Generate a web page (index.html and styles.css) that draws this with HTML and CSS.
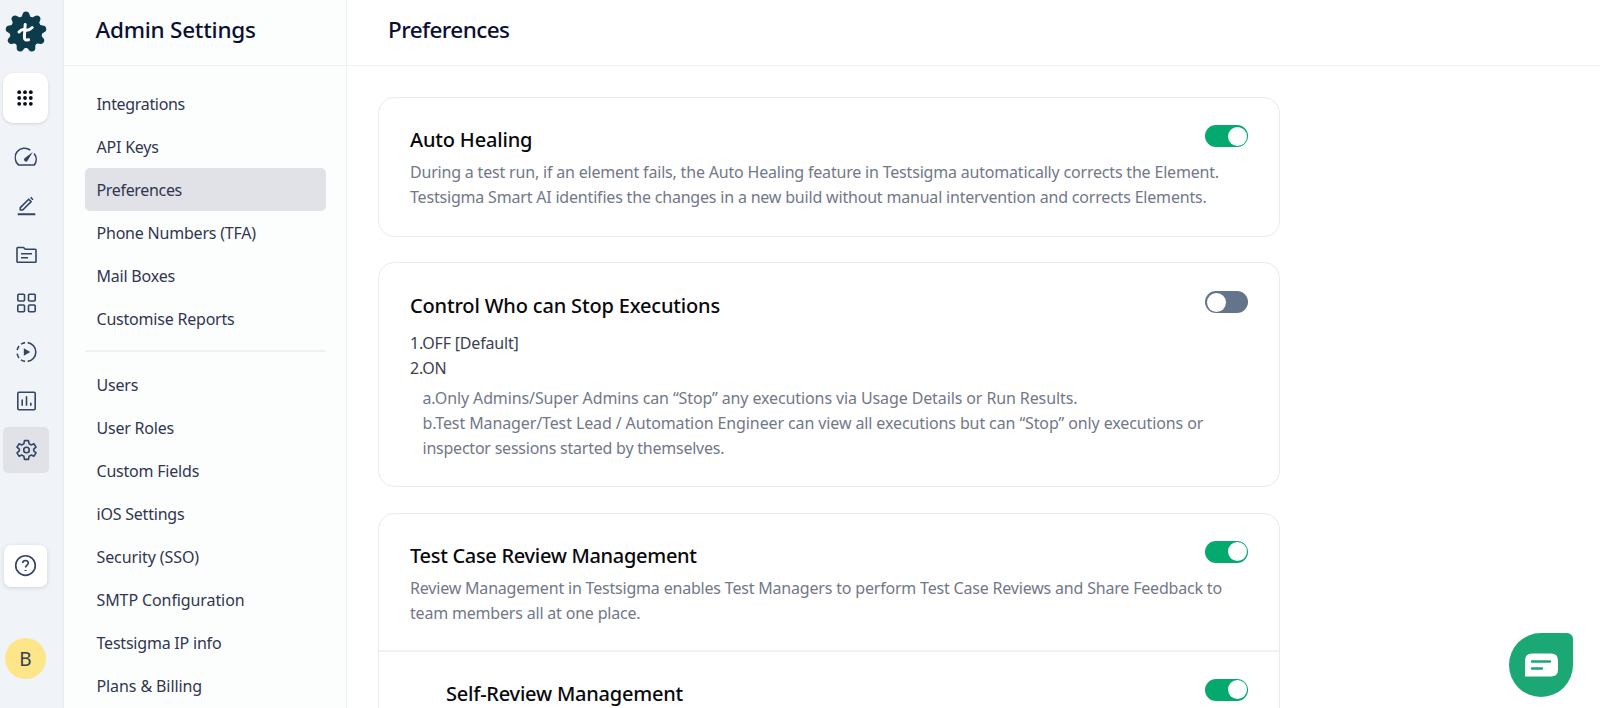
FILE: index.html
```html
<!DOCTYPE html>
<html lang="en">
<head>
<meta charset="utf-8">
<title>Preferences</title>
<link rel="stylesheet" href="styles.css">
</head>
<body>
<div class="app">
  <aside class="rail">
    <svg class="logo" width="42" height="42" viewBox="-21 -21 42 42">
      <defs><path id="tooth" d="M-6-14.500Q-3.900-15-3.500-17.500Q-2.900-20.500 0-20.500T3.500-17.500Q3.900-15 6-14.500L0 0Z"/></defs>
      <g fill="#0d3b4c">
        <circle r="15.700"/>
        <use href="#tooth"/><use href="#tooth" transform="rotate(40)"/><use href="#tooth" transform="rotate(80)"/>
        <use href="#tooth" transform="rotate(120)"/><use href="#tooth" transform="rotate(160)"/><use href="#tooth" transform="rotate(200)"/>
        <use href="#tooth" transform="rotate(240)"/><use href="#tooth" transform="rotate(280)"/><use href="#tooth" transform="rotate(320)"/>
      </g>
      <g fill="none" stroke="#fff" stroke-width="3" stroke-linecap="round" stroke-linejoin="round">
        <path d="M-.8-7.500-1.600 4.500Q-1.800 8.300 1.200 8L2.600 7.800M-7 0Q-3.800-3.400-1-2 2.500-.8 6.200-4.500"/>
      </g>
    </svg>
    <div class="apps"><svg width="16" height="16" viewBox="0 0 16 16" fill="#0a0c18"><circle cx="2.200" cy="2.200" r="1.900"/><circle cx="8" cy="2.200" r="1.900"/><circle cx="13.800" cy="2.200" r="1.900"/><circle cx="2.200" cy="8" r="1.900"/><circle cx="8" cy="8" r="1.900"/><circle cx="13.800" cy="8" r="1.900"/><circle cx="2.200" cy="13.800" r="1.900"/><circle cx="8" cy="13.800" r="1.900"/><circle cx="13.800" cy="13.800" r="1.900"/></svg></div>
    <nav class="tools">
      <a class="tool"><svg viewBox="0 0 24 24"><path d="M15.800 5.200A9.400 9.400 0 0 0 4.200 20H19.800A9.400 9.400 0 0 0 19.600 8.500"/><path class="solid" d="M18.300 7.100 13 15.700A1.900 1.900 0 1 1 10.300 13.100Z"/></svg></a>
      <a class="tool"><svg viewBox="0 0 24 24"><path d="M3.200 20.200H20.800" stroke-width="2"/><path d="M5.800 16V13.600L14.200 5.200 16.600 7.600 8.200 16ZM16.100 3.300 18.500 5.700"/></svg></a>
      <a class="tool"><svg viewBox="0 0 24 24"><path d="M2.500 5.200Q2.500 4.500 3.200 4.500H9L11 6.300H20.800Q21.500 6.300 21.500 7V18.500Q21.500 19.200 20.800 19.200H3.200Q2.500 19.200 2.500 18.500ZM6.500 10.700H17.500M6.500 14.700H13.500"/></svg></a>
      <a class="tool"><svg viewBox="0 0 24 24"><rect x="3.300" y="3.300" width="6.700" height="6.700" rx="1"/><rect x="14" y="3.300" width="6.700" height="6.700" rx="1"/><rect x="3.300" y="14" width="6.700" height="6.700" rx="1"/><rect x="14" y="14" width="6.700" height="6.700" rx="1"/></svg></a>
      <a class="tool"><svg viewBox="0 0 24 24"><path d="M13.200 2.600A9.500 9.500 0 0 1 13.200 21.400M10.500 2.600A9.500 9.500 0 0 0 6.600 4.200M4.600 6A9.500 9.500 0 0 0 2.700 10.200M2.700 13.600A9.500 9.500 0 0 0 4.500 17.900M6.500 19.800A9.500 9.500 0 0 0 10.500 21.400"/><path class="solid" d="M9.300 8.300 15.800 12 9.300 15.700Z"/></svg></a>
      <a class="tool"><svg viewBox="0 0 24 24"><rect x="3.300" y="3.300" width="17.400" height="17.400" rx="1.200"/><path d="M7.700 10.500V16.800M12 7.200V16.800M16.300 13.800V16.800"/></svg></a>
      <a class="tool active"><svg viewBox="0 0 24 24"><circle cx="12" cy="12" r="2.800"/><path d="M10 2.600H14L14.600 5.700 16.600 6.900 19.500 5.800 21.500 9.200 19.200 11.200V12.800L21.500 14.800 19.500 18.200 16.600 17.100 14.600 18.300 14 21.400H10L9.400 18.300 7.400 17.100 4.500 18.200 2.500 14.800 4.800 12.800V11.200L2.500 9.200 4.500 5.800 7.400 6.900 9.400 5.700Z"/></svg></a>
    </nav>
    <a class="help"><svg viewBox="0 0 24 24"><circle cx="12" cy="12" r="9.400"/><path d="M9.300 9.600Q9.500 7.200 12 7.200 14.700 7.300 14.700 9.700C14.700 11.600 12 11.800 12 14"/><path d="M12 16.300V17.300" stroke-width="1.900"/></svg></a>
    <div class="avatar">B</div>
  </aside>
  <aside class="side">
    <h2 class="head">Admin Settings</h2>
    <ul class="menu">
      <li class="tight">Integrations</li><li>API Keys</li><li class="current tight">Preferences</li><li>Phone Numbers (TFA)</li><li>Mail Boxes</li><li>Customise Reports</li>
    </ul>
    <ul class="menu second">
      <li>Users</li><li>User Roles</li><li>Custom Fields</li><li>iOS Settings</li><li class="wide">Security (SSO)</li><li class="wide">SMTP Configuration</li><li>Testsigma IP info</li><li class="wide">Plans &amp; Billing</li>
    </ul>
  </aside>
  <main class="main">
    <h1 class="head">Preferences</h1>
    <div class="cards">
      <section class="card healing">
        <div class="row"><h3>Auto Healing</h3><span class="toggle on"></span></div>
        <p><span class="line">During a test run, if an element fails, the Auto Healing feature in Testsigma automatically corrects the Element.</span><span class="line">Testsigma Smart AI identifies the changes in a new build without manual intervention and corrects Elements.</span></p>
      </section>
      <section class="card control">
        <div class="row"><h3>Control Who can Stop Executions</h3><span class="toggle"></span></div>
        <p class="states"><span class="line">1.OFF [Default]</span><span class="line">2.ON</span></p>
        <p class="notes"><span class="line">a.Only Admins/Super Admins can “Stop” any executions via Usage Details or Run Results.</span><span class="line">b.Test Manager/Test Lead / Automation Engineer can view all executions but can “Stop” only executions or</span><span class="line tight">inspector sessions started by themselves.</span></p>
      </section>
      <section class="card review">
        <div class="row"><h3>Test Case Review Management</h3><span class="toggle on"></span></div>
        <p><span class="line">Review Management in Testsigma enables Test Managers to perform Test Case Reviews and Share Feedback to</span><span class="line">team members all at one place.</span></p>
        <div class="sub"><div class="row"><h3>Self-Review Management</h3><span class="toggle on"></span></div></div>
      </section>
    </div>
  </main>
  <button class="chat"><svg width="33" height="24" viewBox="0 0 33 24"><path d="M0 7.500Q0 .5 7 .5H26Q33 .5 33 7.500V16.500Q33 23.500 26 23.500H0Z" fill="#fff"/><path d="M7 8.500H25M7 15.500H17" stroke="#1ca875" stroke-width="2.400" stroke-linecap="round"/></svg></button>
</div>
</body>
</html>
```
FILE: styles.css
```css
* { box-sizing: border-box; }
body, h1, h2, h3, p, ul { margin: 0; padding: 0; }
body { font-family: "Noto Sans", "Open Sans", sans-serif; background: #fff; overflow: hidden; }
.app { display: flex; height: 708px; overflow: hidden; }

.rail { width: 64px; flex: none; background: #f0f4f8; border-right: 1px solid #e8ecef; display: flex; flex-direction: column; }
.rail svg { display: block; }
.logo { margin: 11px 0 0 4.500px; }
.apps { width: 45px; height: 50px; margin: 20px 0 0 3px; padding-right: 1px; border-radius: 10px; background: #fff; box-shadow: 0 1px 3px rgba(30,40,60,.15); display: flex; align-items: center; justify-content: center; }
.tools { margin: 11px 0 0 3px; display: flex; flex-direction: column; gap: 2.800px; }
.tool { width: 46px; height: 46px; border-radius: 5px; display: flex; align-items: center; justify-content: center; }
.tool.active { background: #e0e2e8; }
.tool svg, .help svg { width: 24px; height: 24px; fill: none; stroke: #334465; stroke-width: 1.600; stroke-linejoin: round; stroke-linecap: butt; }
.tool svg { transform: translateX(.5px); }
.tool svg .solid { fill: #334465; stroke: none; }
.help { width: 43px; height: 42px; margin: 72px 0 0 4px; border-radius: 7px; background: #fff; box-shadow: 0 1px 4px rgba(30,40,60,.16); display: flex; align-items: center; justify-content: center; }
.help svg { width: 25px; height: 25px; }
.avatar { width: 41px; height: 41px; margin: 51px 0 0 5px; padding-top: 2px; border-radius: 50%; background: #fde68a; color: #334155; font-size: 19px; display: flex; align-items: center; justify-content: center; }

.head { height: 66px; border-bottom: 1px solid #eff0f2; font-size: 22.500px; line-height: 59px; font-weight: 500; color: #0b1033; white-space: nowrap; letter-spacing: -.25px; }
.side { width: 283px; flex: none; background: #fcfefe; border-right: 1px solid #eff0f2; }
.side .head { padding-left: 31.500px; }
.menu { list-style: none; margin: 16px 20px 0 21px; }
.menu li { height: 43.100px; line-height: 44px; padding-left: 11.500px; font-size: 16px; letter-spacing: -.21px; color: #30364f; border-radius: 5px; white-space: nowrap; }
.menu li.tight { letter-spacing: -.33px; }
.menu li.wide { letter-spacing: -.1px; }
.menu li.current { background: #e0e2e8; }
.menu.second { margin-top: 9.500px; border-top: 2px solid #f0f1f3; padding-top: 10.500px; }

.main { flex: 1; }
.main .head { padding-left: 41px; letter-spacing: -.57px; }
.cards { width: 902px; margin: 31px 0 0 31px; display: flex; flex-direction: column; gap: 25.300px; }
.card { flex: none; border: 1px solid #eaebed; border-radius: 16px; padding: 27px 31px 0; }
.row { display: flex; justify-content: space-between; align-items: flex-start; height: 35px; }
h3 { font-size: 20px; line-height: 30px; font-weight: 500; color: #08090c; white-space: nowrap; letter-spacing: -.17px; }
.card p { font-size: 16px; line-height: 25px; color: #727888; letter-spacing: -.19px; }
.line { display: block; white-space: nowrap; }
.healing { height: 140px; }
.control { height: 225px; padding-top: 28px; }
.review { height: 250px; }
.review h3 { letter-spacing: -.3px; }
.card .states { margin-top: 5px; color: #3c4150; }
.card .notes { margin: 5px 0 0 12.500px; letter-spacing: -.11px; }
.notes .tight { letter-spacing: -.23px; }
.sub { margin: 24px -31px 0; padding: 27px 31px 0 67px; border-top: 2px solid #f1f1f3; }
.sub h3 { letter-spacing: -.22px; }
.toggle { width: 43px; height: 22px; border-radius: 11px; background: #64748b; display: flex; padding: 1.500px; }
.toggle::before { content: ""; width: 19px; height: 19px; border-radius: 50%; background: #fff; }
.toggle.on { background: #04aa6d; justify-content: flex-end; }

.chat { position: absolute; right: 27px; top: 633px; width: 64px; height: 64px; border: 0; padding: 0; border-radius: 32px 6px 32px 32px; background: #1ca875; display: flex; align-items: center; justify-content: center; }
```
